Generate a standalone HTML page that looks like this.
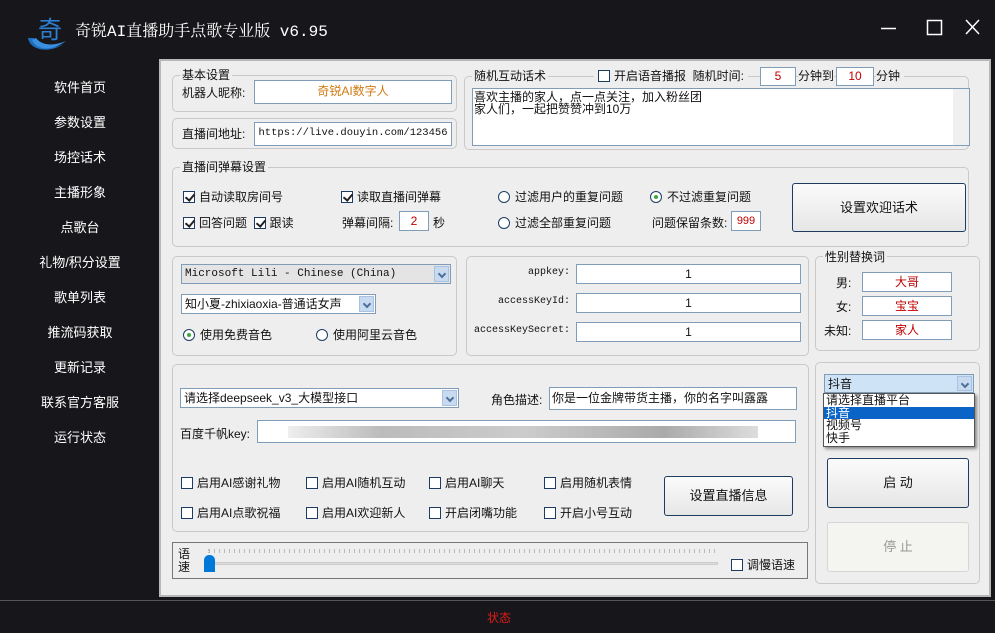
<!DOCTYPE html><html><head><meta charset="utf-8"><style>
*{margin:0;padding:0;box-sizing:border-box}
body{width:995px;height:633px;background:#17171b;position:relative;overflow:hidden;font-family:"Liberation Sans","Noto Sans CJK SC",sans-serif;font-size:12px;color:#111}
.a{position:absolute;white-space:nowrap}
.side{color:#fff;font-size:13px;left:0;width:160px;text-align:center}
.panel{position:absolute;left:159px;top:59px;width:832px;height:538px;background:#eeeeee;border:2px solid #b8b8b8}
.g{position:absolute;border:1px solid #c9c9c9;border-radius:5px}
.inp{position:absolute;background:#fff;border:1px solid #7f9db9;text-align:center;line-height:20px}
.cb{display:inline-block;width:12px;height:12px;border:1px solid #1c3c62;background:#fff;vertical-align:-2px;margin-right:4px}
.cbk{display:inline-block;width:12px;height:12px;border:1px solid #1c3c62;background:#fff;vertical-align:-2px;margin-right:4px;position:relative}
.cbk:after{content:"";position:absolute;left:3px;top:0px;width:4px;height:7px;border:solid #222;border-width:0 2px 2px 0;transform:rotate(40deg)}
.rb{display:inline-block;width:12px;height:12px;border:1px solid #1c3c62;border-radius:50%;background:#fff;vertical-align:-2px;margin-right:5px;position:relative}
.rbk:after{content:"";position:absolute;left:3px;top:3px;width:4px;height:4px;border-radius:50%;background:#3aa83a}
.btn{position:absolute;border:1px solid #1c3c62;border-radius:3px;background:linear-gradient(#fbfbfb,#e6e6e6);text-align:center;font-size:13px}
.sel{position:absolute;border:1px solid #7f9db9;background:#e8e8e8;line-height:18px;padding-left:3px}
.arr{position:absolute;right:1px;top:1px;width:15px;bottom:1px;background:#c7daf0;border:1px solid #a9c2e2}
.arr:after{content:"";position:absolute;left:4px;top:4px;width:4px;height:4px;border:solid #4d6e99;border-width:0 2px 2px 0;transform:rotate(45deg)}
.red{color:#c00000}
.mono{font-family:"Liberation Mono","Noto Sans CJK SC",monospace}
</style></head><body>
<svg class="a" style="left:24px;top:8px" width="44" height="46" viewBox="0 0 44 46"><path d="M4 30 C6 42 24 46 40 36 C28 42 12 40 10 30Z" fill="#1f6fbf"/><path d="M8 32 C14 44 30 42 42 33 C30 38 18 38 12 30Z" fill="#3a8fe0"/><text x="14" y="30" font-size="24" fill="#2c7fd1" font-family="Noto Sans CJK SC">奇</text></svg>
<div class="a" style="left:75px;top:18px;color:#fff;font-size:16px;font-family:'Liberation Mono','Noto Serif CJK SC',monospace">奇锐AI直播助手点歌专业版 v6.95</div>
<svg class="a" style="left:875px;top:15px" width="115" height="28"><line x1="6" y1="13.5" x2="21" y2="13.5" stroke="#fff" stroke-width="1.5"/><rect x="52.5" y="5.5" width="14" height="14" fill="none" stroke="#fff" stroke-width="1.5"/><path d="M91 5 L104 19 M104 5 L91 19" stroke="#fff" stroke-width="1.5"/></svg>
<div class="a side" style="top:77px">软件首页</div><div class="a side" style="top:112px">参数设置</div><div class="a side" style="top:147px">场控话术</div><div class="a side" style="top:182px">主播形象</div><div class="a side" style="top:217px">点歌台</div><div class="a side" style="top:252px">礼物/积分设置</div><div class="a side" style="top:287px">歌单列表</div><div class="a side" style="top:322px">推流码获取</div><div class="a side" style="top:357px">更新记录</div><div class="a side" style="top:392px">联系官方客服</div><div class="a side" style="top:427px">运行状态</div>
<div class="panel"></div>
<div class="g" style="left:172px;top:75px;width:285px;height:37px"></div>
<div class="a" style="left:180px;top:66px;background:#eee;padding:0 2px">基本设置</div>
<div class="a" style="left:182px;top:84px">机器人昵称:</div>
<div class="inp" style="left:254px;top:80px;width:198px;height:24px;color:#d07a10">奇锐AI数字人</div>
<div class="g" style="left:172px;top:118px;width:285px;height:31px"></div>
<div class="a" style="left:182px;top:125px">直播间地址:</div>
<div class="inp mono" style="left:254px;top:122px;width:198px;height:24px;font-size:10.5px;overflow:hidden">https://live.douyin.com/123456</div>
<div class="g" style="left:464px;top:76px;width:505px;height:74px"></div>
<div class="a" style="left:472px;top:67px;background:#eee;padding:0 2px">随机互动话术</div>
<div class="a" style="left:594px;top:67px;background:#eee;padding:0 4px"><span class="cb"></span>开启语音播报 &nbsp;随机时间:</div>
<div class="inp red" style="left:760px;top:67px;width:36px;height:19px;line-height:17px">5</div>
<div class="a" style="left:798px;top:67px;background:#eee">分钟到</div>
<div class="inp red" style="left:836px;top:67px;width:38px;height:19px;line-height:17px">10</div>
<div class="a" style="left:876px;top:67px;background:#eee;padding-right:4px">分钟</div>
<div class="a" style="left:472px;top:88px;width:498px;height:58px;background:#fff;border:1px solid #7f9db9;line-height:12px;padding:2px 1px;white-space:normal">喜欢主播的家人，点一点关注，加入粉丝团<br>家人们，一起把赞赞冲到10万<div style="position:absolute;right:0;top:0;width:16px;height:56px;background:#f0f0f0"></div></div>
<div class="g" style="left:172px;top:167px;width:797px;height:80px"></div>
<div class="a" style="left:180px;top:158px;background:#eee;padding:0 2px">直播间弹幕设置</div>
<div class="a" style="left:183px;top:188px"><span class="cbk"></span>自动读取房间号</div>
<div class="a" style="left:341px;top:188px"><span class="cbk"></span>读取直播间弹幕</div>
<div class="a" style="left:183px;top:214px"><span class="cbk"></span>回答问题 &nbsp;<span class="cbk"></span>跟读</div>
<div class="a" style="left:342px;top:214px">弹幕间隔:</div>
<div class="inp red" style="left:399px;top:211px;width:30px;height:20px;line-height:18px">2</div>
<div class="a" style="left:433px;top:214px">秒</div>
<div class="a" style="left:498px;top:188px"><span class="rb"></span>过滤用户的重复问题</div>
<div class="a" style="left:650px;top:188px"><span class="rb rbk"></span>不过滤重复问题</div>
<div class="a" style="left:498px;top:214px"><span class="rb"></span>过滤全部重复问题</div>
<div class="a" style="left:652px;top:214px">问题保留条数:</div>
<div class="inp red" style="left:731px;top:211px;width:30px;height:20px;line-height:18px;font-size:11px">999</div>
<div class="btn" style="left:792px;top:183px;width:174px;height:49px;line-height:47px">设置欢迎话术</div>
<div class="g" style="left:172px;top:256px;width:285px;height:100px"></div>
<div class="sel mono" style="left:181px;top:264px;width:270px;height:20px;font-size:11px;background:#e4e4e4">Microsoft Lili - Chinese (China)<div class="arr"></div></div>
<div class="sel" style="left:181px;top:294px;width:195px;height:20px;background:#fff">知小夏-zhixiaoxia-普通话女声<div class="arr"></div></div>
<div class="a" style="left:183px;top:326px"><span class="rb rbk"></span>使用免费音色</div>
<div class="a" style="left:316px;top:326px"><span class="rb"></span>使用阿里云音色</div>
<div class="g" style="left:466px;top:256px;width:343px;height:100px"></div>
<div class="a mono" style="left:466px;top:267px;width:104px;text-align:right;font-size:10px">appkey:</div>
<div class="a mono" style="left:466px;top:296px;width:104px;text-align:right;font-size:10px">accessKeyId:</div>
<div class="a mono" style="left:466px;top:325px;width:104px;text-align:right;font-size:10px">accessKeySecret:</div>
<div class="inp" style="left:576px;top:264px;width:225px;height:20px;line-height:18px">1</div>
<div class="inp" style="left:576px;top:293px;width:225px;height:20px;line-height:18px">1</div>
<div class="inp" style="left:576px;top:322px;width:225px;height:20px;line-height:18px">1</div>
<div class="g" style="left:815px;top:256px;width:165px;height:95px"></div>
<div class="a" style="left:823px;top:248px;background:#eee;padding:0 2px">性别替换词</div>
<div class="a" style="left:836px;top:274px">男:</div><div class="a" style="left:836px;top:298px">女:</div><div class="a" style="left:824px;top:322px">未知:</div>
<div class="inp red" style="left:862px;top:272px;width:90px;height:20px;line-height:18px">大哥</div>
<div class="inp red" style="left:862px;top:296px;width:90px;height:20px;line-height:18px">宝宝</div>
<div class="inp red" style="left:862px;top:320px;width:90px;height:20px;line-height:18px">家人</div>
<div class="g" style="left:172px;top:364px;width:637px;height:168px"></div>
<div class="sel" style="left:180px;top:388px;width:279px;height:20px;background:#fff">请选择deepseek_v3_大模型接口<div class="arr"></div></div>
<div class="a" style="left:491px;top:391px">角色描述:</div>
<div class="inp" style="left:549px;top:387px;width:248px;height:23px;text-align:left;padding-left:2px">你是一位金牌带货主播，你的名字叫露露</div>
<div class="a" style="left:180px;top:425px">百度千帆key:</div>
<div class="inp" style="left:257px;top:420px;width:539px;height:23px"><div style="position:absolute;left:30px;top:5px;width:470px;height:12px;background:linear-gradient(90deg,#eee,#bbb 20%,#ccc 50%,#aaa 80%,#ddd)"></div></div>
<div class="a" style="left:181px;top:474px"><span class="cb"></span>启用AI感谢礼物</div>
<div class="a" style="left:306px;top:474px"><span class="cb"></span>启用AI随机互动</div>
<div class="a" style="left:429px;top:474px"><span class="cb"></span>启用AI聊天</div>
<div class="a" style="left:544px;top:474px"><span class="cb"></span>启用随机表情</div>
<div class="a" style="left:181px;top:504px"><span class="cb"></span>启用AI点歌祝福</div>
<div class="a" style="left:306px;top:504px"><span class="cb"></span>启用AI欢迎新人</div>
<div class="a" style="left:429px;top:504px"><span class="cb"></span>开启闭嘴功能</div>
<div class="a" style="left:544px;top:504px"><span class="cb"></span>开启小号互动</div>
<div class="btn" style="left:664px;top:476px;width:129px;height:40px;line-height:38px">设置直播信息</div>
<div class="a" style="left:172px;top:542px;width:636px;height:37px;border:1px solid #777;background:#eee"></div>
<div class="a" style="left:178px;top:548px;width:14px;line-height:13px;white-space:normal">语速</div>
<div class="a" style="left:208px;top:562px;width:510px;height:3px;background:#dcdcdc;border:1px solid #ccc"></div>
<div class="a" style="left:208px;top:549px;width:510px;height:4px;border-left:1px dotted #bbb;background:repeating-linear-gradient(90deg,#bbb 0 1px,transparent 1px 5px)"></div>
<div class="a" style="left:204px;top:555px;width:11px;height:17px;background:#0078d7;border-radius:5px 5px 0 0"></div>
<div class="a" style="left:731px;top:556px"><span class="cb"></span>调慢语速</div>
<div class="g" style="left:815px;top:362px;width:165px;height:222px"></div>
<div class="sel" style="left:824px;top:374px;width:150px;height:19px;background:#cfe3f7">抖音<div class="arr"></div></div>
<div class="a" style="left:823px;top:393px;width:152px;height:54px;background:#fff;border:1px solid #555;box-shadow:2px 2px 3px #888;line-height:12.5px">
<div style="padding-left:2px">请选择直播平台</div><div style="padding-left:2px;background:#0a64c8;color:#fff">抖音</div><div style="padding-left:2px">视频号</div><div style="padding-left:2px">快手</div></div>
<div class="btn" style="left:827px;top:458px;width:142px;height:50px;line-height:48px">启 动</div>
<div class="a" style="left:827px;top:522px;width:142px;height:50px;line-height:48px;border:1px solid #d6d6d6;border-radius:3px;background:#f4f4f0;color:#999;text-align:center;font-size:13px">停 止</div>
<div class="a" style="left:0;top:600px;width:995px;height:1px;background:#555"></div>
<div class="a" style="left:487px;top:609px;color:#e01818;font-size:12px">状态</div>
</body></html>
